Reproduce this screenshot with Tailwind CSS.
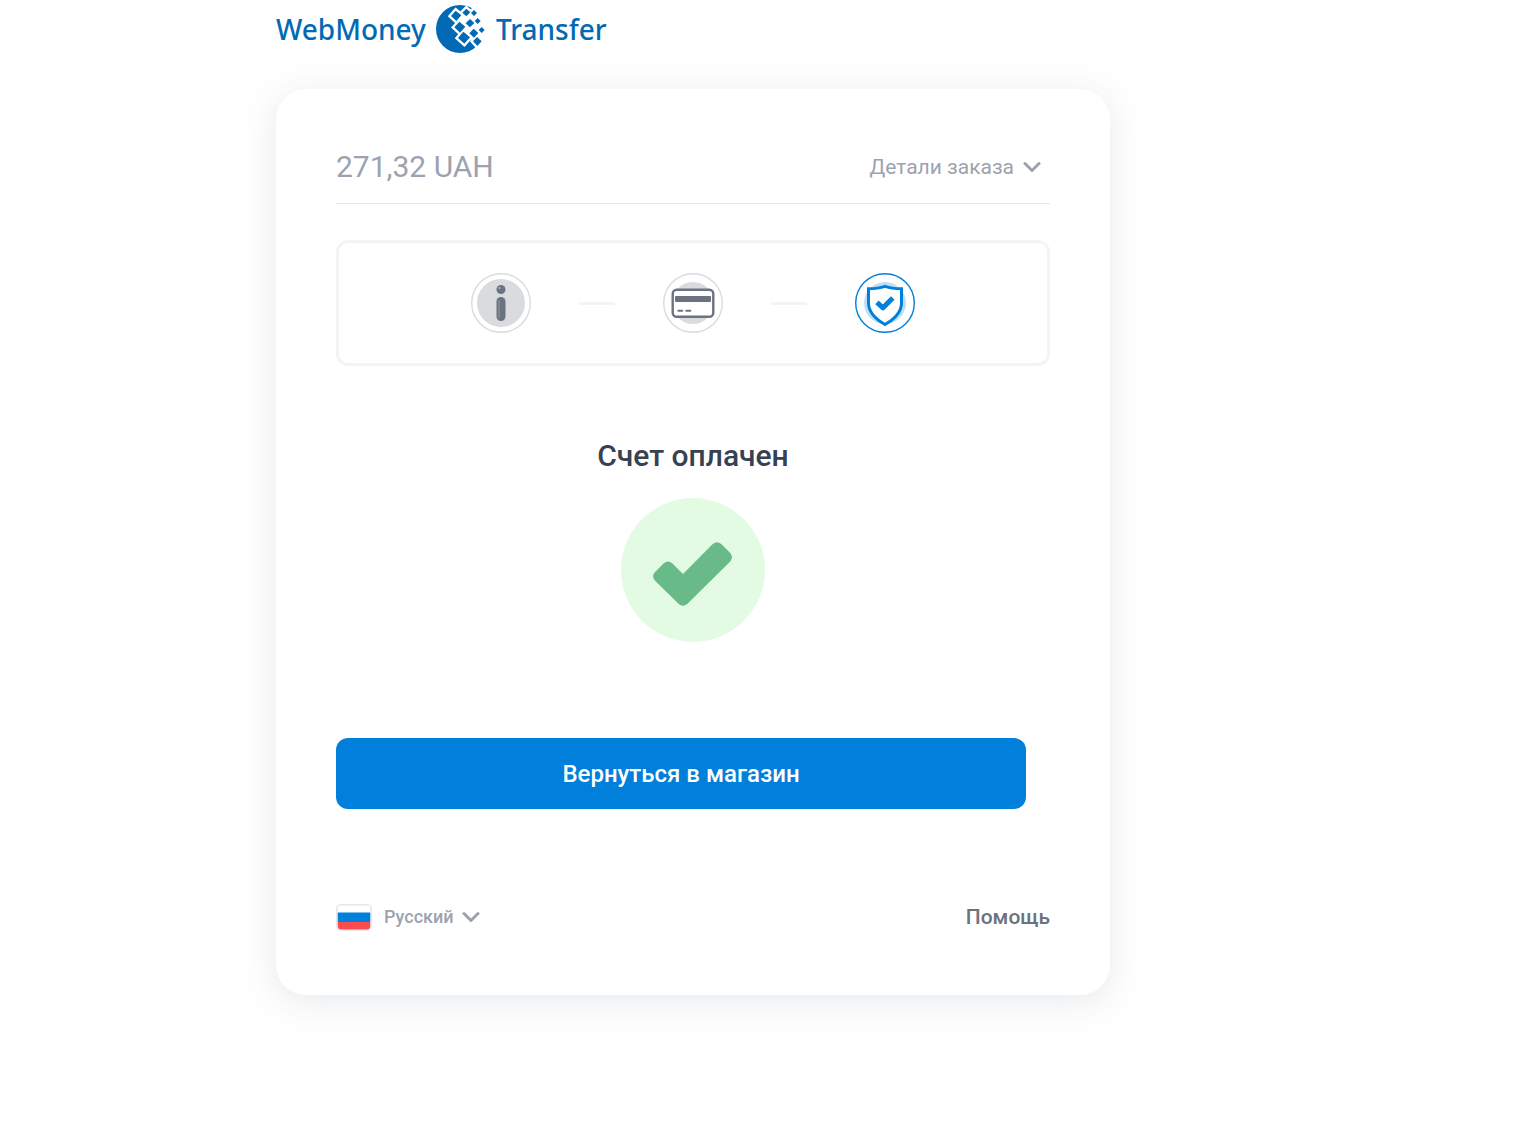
<!DOCTYPE html>
<html lang="ru">
<head>
<meta charset="utf-8">
<meta name="viewport" content="width=device-width, initial-scale=1">
<title>WebMoney Transfer</title>
<script src="https://cdn.jsdelivr.net/npm/@tailwindcss/browser@4"></script>
</head>
<body class="min-h-screen bg-[#fefefe] font-[Roboto,sans-serif] text-[#9ca3af]">
<div class="mx-auto max-w-[968px]">
  <header class="h-[89px] pt-[5px]">
    <a href="#" class="flex h-12 items-center gap-2.5 font-['Noto_Sans',sans-serif] text-[28px] leading-12 font-medium text-[#026ab5]">
      <span>WebMoney</span>
      <svg class="h-12 w-[50px]" viewBox="33 15 150 144" aria-hidden="true">
        <circle cx="105" cy="87" r="72" fill="#026ab5"/>
        <path fill="#fefefe" d="M94 48l30-10 20-16 8-8h38v136h-20l-14-26-39-10-12-32z"/>
        <g fill="none" stroke="#fefefe" stroke-width="14">
          <path d="M92 32l17 14-15 17-16-15zM103 65l18 15-16 18-17-16zM115 95l20 17-17 19-19-17z"/>
          <path d="M124 26l12 11-12 12-12-11zM135 57l13 12-13 13-13-12zM146 86l14 13-13 14-14-13zM156 111l14 13-13 14-13-14z"/>
        </g>
        <g fill="#026ab5">
          <path d="M92 32l17 14-15 17-16-15zM103 65l18 15-16 18-17-16zM115 95l20 17-17 19-19-17z"/>
          <path d="M124 26l12 11-12 12-12-11zM135 57l13 12-13 13-13-12zM146 86l14 13-13 14-14-13zM156 111l14 13-13 14-13-14z"/>
          <path d="M147 30l9 9-9 9-9-9zM158 54l9 9-9 9-9-9zM170 81l9 9-9 9-9-9z"/>
        </g>
      </svg>
      <span>Transfer</span>
    </a>
  </header>

  <main class="max-w-[834px] rounded-[30px] bg-white px-[60px] pt-[54px] pb-[60px] shadow-[0_6px_30px_rgba(40,60,90,0.1)]">
    <div class="flex h-[61px] items-start justify-between border-b border-[#e5e7eb]">
      <p class="text-[30px] leading-12">271,32 UAH</p>
      <button type="button" class="flex items-center gap-[9px] pr-[9px] text-[21px] leading-12">
        Детали заказа
        <svg class="h-3 w-[18px]" viewBox="0 0 18 12" fill="none" stroke="currentColor" stroke-width="3" stroke-linecap="round" stroke-linejoin="round" aria-hidden="true"><path d="M2 2.500l7 7 7-7"/></svg>
      </button>
    </div>

    <ol class="mt-9 flex h-[126px] items-center justify-center gap-12 rounded-xl border-3 border-[#f3f4f6]">
      <li>
        <svg class="size-[60px]" viewBox="0 0 60 60" role="img" aria-label="Информация">
          <circle cx="30" cy="30" r="29.300" fill="#fff" stroke="#d9dbdf" stroke-width="1.400"/>
          <circle cx="30" cy="30" r="24" fill="#d9dbdf"/>
          <circle cx="30" cy="16.500" r="4.500" fill="#6b7280"/>
          <rect x="25.500" y="24" width="9" height="24" rx="4.500" fill="#6b7280"/>
          <circle cx="28.500" cy="15" r="1.300" fill="#9ca3af"/>
          <path d="M28 28v16" stroke="#8b919c" stroke-width="1.300" stroke-linecap="round"/>
        </svg>
      </li>
      <li class="h-[3px] w-9 bg-[#f3f4f6]" aria-hidden="true"></li>
      <li>
        <svg class="size-[60px]" viewBox="0 0 60 60" role="img" aria-label="Оплата">
          <circle cx="30" cy="30" r="29.300" fill="#fff" stroke="#d9dbdf" stroke-width="1.400"/>
          <circle cx="30" cy="30" r="21" fill="#d9dbdf"/>
          <rect x="9.700" y="16.700" width="40.600" height="27" rx="4" fill="#fff" stroke="#6b7280" stroke-width="2.400"/>
          <rect x="12" y="23" width="36" height="6" rx="1" fill="#6b7280"/>
          <path d="M15.300 37.800h4M23.300 37.800h4" stroke="#6b7280" stroke-width="2" stroke-linecap="round"/>
        </svg>
      </li>
      <li class="h-[3px] w-9 bg-[#f3f4f6]" aria-hidden="true"></li>
      <li aria-current="step">
        <svg class="size-[60px]" viewBox="0 0 60 60" role="img" aria-label="Готово">
          <circle cx="30" cy="30" r="29.300" fill="#fff" stroke="#0080db" stroke-width="1.400"/>
          <circle cx="30" cy="30" r="21" fill="#bfdff6"/>
          <path d="M30 13.300c5 1.700 10.500 2.400 16.500 2.500v14.200c0 9-6 15.500-16.500 21.500C19.500 45.500 13.500 39 13.500 30V15.800c6-.1 11.500-.8 16.500-2.500z" fill="#fff" stroke="#0080db" stroke-width="3"/>
          <path d="M23.800 31l4.200 3.800 8-8" fill="none" stroke="#0080db" stroke-width="5" stroke-linejoin="round" stroke-linecap="square"/>
        </svg>
      </li>
    </ol>

    <section class="mt-[66px] flex flex-col items-center">
      <h1 class="text-[30px] leading-12 font-medium text-[#374151]">Счет оплачен</h1>
      <svg class="mt-[18px] size-36" viewBox="0 0 144 144" aria-hidden="true">
        <circle cx="72" cy="72" r="72" fill="#e3fbe3"/>
        <path d="M33.800 74.200l9-9q4.200-3.600 8.400 0L62 76l29.800-30q4.200-3.600 8.400 0l9 9q3.600 4.200 0 8.400L66.200 106q-4.200 3.600-8.400 0L33.800 82.400q-3.600-4.100 0-8.200z" fill="#68ba89"/>
      </svg>
    </section>

    <button type="button" class="mt-24 block h-[71px] w-[calc(100%-24px)] rounded-xl bg-[#0080db] text-2xl font-medium text-white">Вернуться в магазин</button>

    <footer class="mt-[90px] flex h-9 items-center justify-between">
      <button type="button" class="flex items-center gap-3 text-lg font-medium">
        <svg class="h-[27px] w-9" viewBox="0 0 36 27" aria-hidden="true">
          <clipPath id="flag"><rect x="1.500" y="1" width="33" height="25" rx="4.500"/></clipPath>
          <rect x=".8" y=".8" width="34.400" height="25.400" rx="4.500" fill="#fff" stroke="#e5e7eb" stroke-width="1.600"/>
          <g clip-path="url(#flag)"><path fill="#0080db" d="M1.500 8.500h33V18h-33z"/><path fill="#f94d4d" d="M1.500 18h33v7.500h-33z"/></g>
        </svg>
        <span class="flex items-center gap-2">Русский
          <svg class="h-3 w-[18px]" viewBox="0 0 18 12" fill="none" stroke="currentColor" stroke-width="3" stroke-linecap="round" stroke-linejoin="round" aria-hidden="true"><path d="M2 2.500l7 7 7-7"/></svg>
        </span>
      </button>
      <a href="#" class="text-[21px] leading-9 font-medium text-[#6b7280]">Помощь</a>
    </footer>
  </main>
</div>
</body>
</html>
